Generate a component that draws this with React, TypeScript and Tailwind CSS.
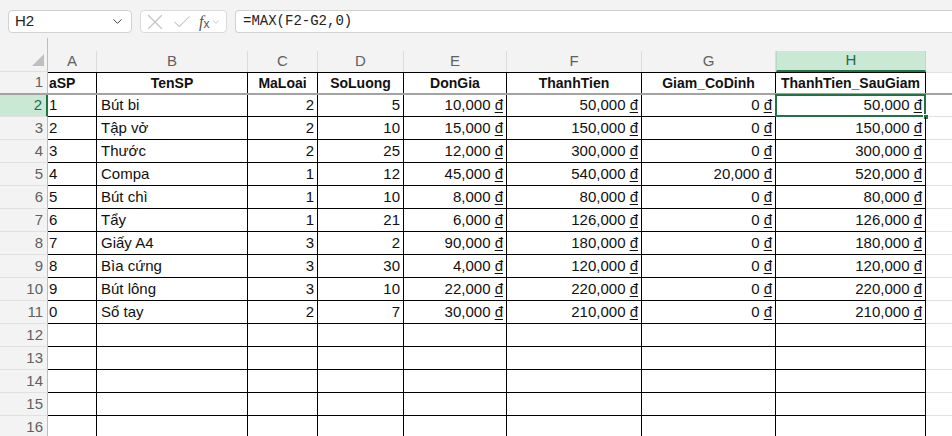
import { X, Check, ChevronDown } from "lucide-react";

const cols = [
  { key: "A", w: "w-[49px]" },
  { key: "B", w: "w-[151px]" },
  { key: "C", w: "w-[70px]" },
  { key: "D", w: "w-[86px]" },
  { key: "E", w: "w-[103px]" },
  { key: "F", w: "w-[135px]" },
  { key: "G", w: "w-[134px]" },
  { key: "H", w: "w-[150px]" },
];

const header = ["aSP", "TenSP", "MaLoai", "SoLuong", "DonGia", "ThanhTien", "Giam_CoDinh", "ThanhTien_SauGiam"];

const rows = [
  ["1", "Bút bi", "2", "5", "10,000", "50,000", "0", "50,000"],
  ["2", "Tập vở", "2", "10", "15,000", "150,000", "0", "150,000"],
  ["3", "Thước", "2", "25", "12,000", "300,000", "0", "300,000"],
  ["4", "Compa", "1", "12", "45,000", "540,000", "20,000", "520,000"],
  ["5", "Bút chì", "1", "10", "8,000", "80,000", "0", "80,000"],
  ["6", "Tẩy", "1", "21", "6,000", "126,000", "0", "126,000"],
  ["7", "Giấy A4", "3", "2", "90,000", "180,000", "0", "180,000"],
  ["8", "Bìa cứng", "3", "30", "4,000", "120,000", "0", "120,000"],
  ["9", "Bút lông", "3", "10", "22,000", "220,000", "0", "220,000"],
  ["0", "Sổ tay", "2", "7", "30,000", "210,000", "0", "210,000"],
];

const font = { fontFamily: '"Liberation Sans", Arial, sans-serif' };

function RowHead({ n, active, h }: { n: number; active?: boolean; h: string }) {
  return (
    <div
      className={`${h} w-[48px] shrink-0 flex items-center justify-end pr-[4px] text-[15px] border-b border-[#e1e1e1] ${
        active
          ? "bg-[#cae9d5] text-[#1e6b43] border-r-2 border-r-[#217346]"
          : "bg-[#f3f3f3] text-[#616161] border-r border-r-[#bdbdbd]"
      }`}
    >
      {n}
    </div>
  );
}

function DataRow({ n, cells, first }: { n: number; cells: string[]; first?: boolean }) {
  const h = first ? "h-[22px]" : "h-[23px]";
  return (
    <div className="flex">
      <RowHead n={n} active={n === 2} h={h} />
      {cols.map((c, i) => {
        const v = cells[i] ?? "";
        const left = i < 2;
        const money = i >= 4 && v !== "";
        const sel = n === 2 && c.key === "H";
        return (
          <div
            key={c.key}
            className={`${c.w} ${h} shrink-0 relative flex items-center border-r border-b border-black text-[15px] text-[#111] whitespace-nowrap ${
              left ? (i === 0 ? "pl-[1px]" : "pl-[4px]") : "justify-end pr-[3px]"
            } ${sel ? "overflow-visible" : "overflow-hidden"}`}
          >
            {money ? (
              <>
                {v}&nbsp;<span className="underline underline-offset-[2px]">đ</span>
              </>
            ) : (
              v
            )}
            {sel && (
              <>
                <div className="absolute -left-[1px] -top-[1px] -right-[1px] -bottom-[1px] border-2 border-[#217346] pointer-events-none" />
                <div className="absolute -right-[4px] -bottom-[4px] w-[6px] h-[6px] bg-[#217346] border border-white" />
              </>
            )}
          </div>
        );
      })}
      <div className={`flex-1 ${h} border-b border-[#e1e1e1] bg-white`} />
    </div>
  );
}

export default function App() {
  return (
    <div className="w-[952px] h-[436px] overflow-hidden bg-white" style={font}>
      {/* formula bar */}
      <div className="h-[38px] bg-[#f3f3f3] flex items-start pt-[10px] pl-[8px] gap-[8px]">
        <div className="w-[124px] h-[23px] bg-white border border-[#d1d1d1] rounded-[4px] flex items-center justify-between pl-[6px] pr-[6px] text-[15px] text-[#222]">
          <span>H2</span>
          <ChevronDown size={15} strokeWidth={1.6} className="text-[#444]" />
        </div>
        <div className="w-[87px] h-[23px] bg-white border border-[#dadada] rounded-[4px] flex items-center pl-[1px] text-[#c2c2c2] overflow-hidden">
          <X size={26} strokeWidth={1} className="shrink-0" />
          <Check size={22} strokeWidth={1.1} className="shrink-0 ml-[3px]" />
          <span className="flex items-center text-[#555] ml-[6px]">
            <span className="italic text-[16px]" style={{ fontFamily: '"Liberation Serif", serif' }}>
              f
            </span>
            <span className="text-[12px] mt-[4px]">x</span>
            <ChevronDown size={10} strokeWidth={1.5} className="ml-[2px] text-[#aaa]" />
          </span>
        </div>
        <div className="flex-1 h-[23px] bg-white border border-r-0 border-[#d1d1d1] rounded-l-[4px] flex items-center pl-[7px] text-[14px] text-[#222]" style={{ fontFamily: '"Liberation Mono", monospace' }}>
          =MAX(F2-G2,0)
        </div>
      </div>

      {/* column letters */}
      <div className="flex h-[34px] bg-[#f3f3f3]">
        <div className="w-[48px] shrink-0 border-r border-[#bdbdbd] border-b border-b-[#e1e1e1] flex items-end justify-end pr-[3px] pb-[5px]">
          <svg width="12" height="12" viewBox="0 0 12 12">
            <polygon points="12,0 12,12 0,12" fill="#bfbfbf" />
          </svg>
        </div>
        {cols.map((c) => (
          <div key={c.key} className={`${c.w} shrink-0 flex flex-col justify-end`}>
            <div
              className={`h-[21px] flex items-center justify-center text-[15px] ${
                c.key === "H"
                  ? "bg-[#cae9d5] text-[#1e6b43] border-b-2 border-[#217346] border-x border-x-[#b5dcc3]"
                  : "text-[#616161] border-r border-[#dcdcdc]"
              }`}
            >
              {c.key}
            </div>
          </div>
        ))}
        <div className="flex-1" />
      </div>

      {/* row 1 */}
      <div className="flex">
        <div className="h-[21px] w-[48px] shrink-0 flex items-center justify-end pr-[4px] text-[15px] bg-[#f3f3f3] text-[#616161] border-r border-[#bdbdbd]">
          1
        </div>
        {cols.map((c, i) => (
          <div
            key={c.key}
            className={`${c.w} h-[21px] shrink-0 flex items-center border-r border-t border-black text-[14px] font-bold text-[#111] whitespace-nowrap overflow-hidden ${
              i === 0 ? "pl-[1px]" : "justify-center"
            }`}
          >
            {header[i]}
          </div>
        ))}
        <div className="flex-1 h-[21px] border-t border-[#e1e1e1]" />
      </div>
      <div className="h-[2px] bg-[#a3a3a3]" />

      {rows.map((r, i) => (
        <DataRow key={i} n={i + 2} cells={r} first={i === 0} />
      ))}
      {[12, 13, 14, 15, 16].map((n) => (
        <DataRow key={n} n={n} cells={[]} />
      ))}
    </div>
  );
}
